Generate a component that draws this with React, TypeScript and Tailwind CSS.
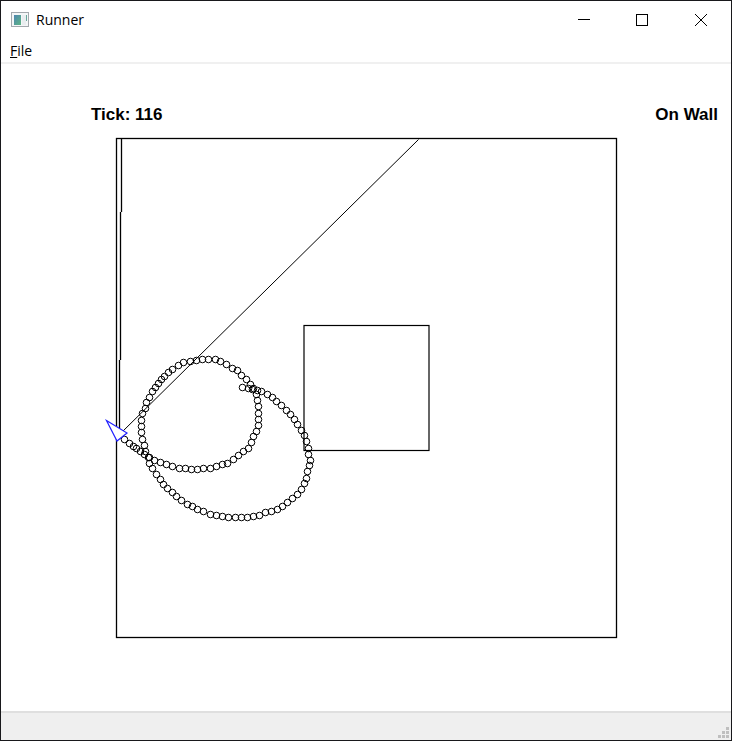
import { useState } from 'react'

const trail: [number, number][] = [
  [242, 387], [248, 388], [252, 389], [257, 390], [261, 391], [267, 394], [272, 397], [276, 401],
  [281, 405], [286, 410], [290, 414], [294, 419], [297, 424], [301, 430], [304, 435], [306, 441],
  [308, 448], [308, 454], [310, 460], [309, 465], [307, 471], [306, 478], [304, 483], [301, 489],
  [297, 494], [292, 498], [287, 502], [282, 506], [277, 509], [271, 511], [265, 512], [259, 515],
  [253, 516], [247, 517], [241, 517], [235, 517], [228, 517], [222, 516], [216, 515], [210, 514],
  [203, 511], [197, 509], [192, 506], [187, 504], [181, 500], [176, 496], [172, 492], [167, 488],
  [163, 484], [160, 479], [156, 474], [152, 468], [149, 463], [148, 457], [145, 451], [144, 445],
  [142, 439], [141, 432], [141, 426], [141, 420], [142, 413], [145, 408], [146, 402], [149, 397],
  [152, 391], [155, 387], [158, 383], [161, 379], [164, 376], [168, 372], [172, 369], [178, 365],
  [183, 362], [190, 361], [196, 360], [202, 359], [208, 359], [215, 359], [220, 361], [226, 364],
  [232, 368], [237, 370], [241, 375], [246, 379], [250, 384], [253, 388], [256, 394], [257, 400],
  [258, 406], [258, 413], [258, 419], [258, 425], [256, 431], [253, 436], [251, 442], [248, 448],
  [243, 451], [238, 455], [233, 459], [227, 463], [222, 464], [216, 466], [210, 468], [203, 468],
  [197, 469], [191, 469], [185, 468], [179, 468], [172, 466], [166, 464], [160, 462], [154, 460],
  [149, 457], [144, 454], [140, 451], [136, 448], [133, 446], [129, 443], [124, 439],
]

function AppIcon() {
  return (
    <svg width="20" height="16" viewBox="0 0 20 16" aria-hidden="true">
      <defs>
        <linearGradient id="pane" x1="0" y1="0" x2="1" y2="1">
          <stop offset="0" stopColor="#4f86b0" />
          <stop offset="1" stopColor="#5cb583" />
        </linearGradient>
      </defs>
      <rect x="1.5" y="0.5" width="17" height="14" fill="#f4f6f7" stroke="#a3a8ad" />
      <rect x="4" y="3" width="7" height="10" fill="url(#pane)" />
      <rect x="12" y="3" width="4" height="10" fill="#e9edef" />
      <rect x="16" y="3" width="1" height="6" fill="#67a79b" />
    </svg>
  )
}

function TitleBar() {
  return (
    <header className="flex h-[37px] shrink-0 items-center pl-[9px] font-['Open_Sans',sans-serif]">
      <AppIcon />
      <h1 className="flex-1 pl-[6px] text-[14px] leading-5">Runner</h1>
      <button aria-label="Minimize" className="flex h-full w-[58px] items-center justify-center">
        <svg width="12" height="12" shapeRendering="crispEdges">
          <path d="M0 5.5H12" stroke="#000" />
        </svg>
      </button>
      <button aria-label="Maximize" className="flex h-full w-[58px] items-center justify-center">
        <svg width="12" height="12" shapeRendering="crispEdges">
          <rect x="0.5" y="0.5" width="11" height="11" fill="none" stroke="#000" />
        </svg>
      </button>
      <button aria-label="Close" className="flex h-full w-[60px] items-center justify-center">
        <svg width="12" height="12">
          <path d="M0 0L12 12M12 0L0 12" stroke="#000" />
        </svg>
      </button>
    </header>
  )
}

// field coordinates are the window's own, so the viewBox is offset
function Field() {
  return (
    <svg
      width="513"
      height="503"
      viewBox="105 137 513 503"
      fill="none"
      stroke="#000"
      role="img"
      aria-label="Runner path"
    >
      <rect x="116.5" y="138.5" width="500" height="499" strokeWidth="1.3" />
      <rect x="304" y="325.5" width="125" height="125" strokeWidth="1.2" />
      <path d="M121.5 139V212M120.5 212V360M119.5 360V430" strokeWidth="1.3" />
      <path d="M418.5 139.5L121 433" />
      {trail.map(([x, y], i) => (
        <circle key={i} cx={x + 0.5} cy={y + 0.5} r="3.3" />
      ))}
      <path d="M106.5 420.5L127 433L117 441Z" fill="#fff" stroke="#22f" strokeWidth="1.2" />
    </svg>
  )
}

export default function App() {
  const [tick] = useState(116)

  return (
    <div className="flex min-h-screen flex-col border border-[#18181b] bg-white text-black">
      <TitleBar />
      <nav className="flex h-6 shrink-0 items-center pt-[2px] pl-[9px] font-['Open_Sans',sans-serif]">
        <button className="text-[14px] leading-5">
          <span className="underline">F</span>ile
        </button>
      </nav>
      <main className="flex-1 border-t-2 border-[#f0f0f0]">
        <div className="flex justify-between pt-[39px] pr-[13px] pl-[90px] font-['Liberation_Sans',sans-serif] text-[17px] leading-6 font-bold">
          <span>Tick: {tick}</span>
          <span>On Wall</span>
        </div>
        <div className="pt-[10px] pl-[104px]">
          <Field />
        </div>
      </main>
      <footer className="flex h-[29px] shrink-0 items-end justify-end border-t-2 border-[#dfdfdf] bg-[#efefef] pr-[2px] pb-[2px]">
        <svg width="11" height="11" fill="#bfbfbf" aria-hidden="true">
          <path d="M8 0h3v3h-3zM4 4h3v3h-3zM8 4h3v3h-3zM0 8h3v3h-3zM4 8h3v3h-3zM8 8h3v3h-3z" />
        </svg>
      </footer>
    </div>
  )
}
